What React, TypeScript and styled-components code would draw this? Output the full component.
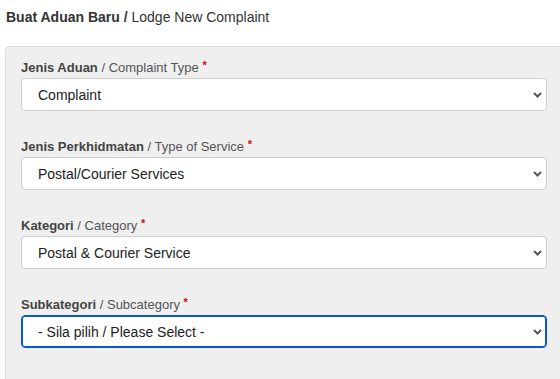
import styled, { createGlobalStyle } from "styled-components";

const GlobalStyle = createGlobalStyle`
  html, body {
    margin: 0;
    padding: 0;
    background: #ffffff;
    overflow: hidden;
    font-family: "Liberation Sans", Arial, Helvetica, sans-serif;
  }
`;

const fields = [
  { id: "jenis", ms: "Jenis Aduan", en: "Complaint Type", value: "Complaint" },
  { id: "perkhidmatan", ms: "Jenis Perkhidmatan", en: "Type of Service", value: "Postal/Courier Services" },
  { id: "kategori", ms: "Kategori", en: "Category", value: "Postal & Courier Service" },
  { id: "subkategori", ms: "Subkategori", en: "Subcategory", value: "- Sila pilih / Please Select -", focused: true },
];

export default function App() {
  return (
    <Page>
      <GlobalStyle />
      <Title>
        <strong>Buat Aduan Baru /</strong> Lodge New Complaint
      </Title>
      <Panel>
        {fields.map((f) => (
          <Field key={f.id}>
            <Label htmlFor={f.id}>
              <strong>{f.ms}</strong> / {f.en} <Required>*</Required>
            </Label>
            <Select id={f.id} $focused={!!f.focused}>
              <span>{f.value}</span>
              <Chevron viewBox="0 0 9 6">
                <path d="M1 1 L4.5 4.5 L8 1" fill="none" stroke="#555" strokeWidth="2" />
              </Chevron>
            </Select>
          </Field>
        ))}
      </Panel>
    </Page>
  );
}

const Page = styled.div`
  padding: 8px 0 0 5px;
  width: 600px;
`;

const Title = styled.h4`
  margin: 0 0 19px 1px;
  font-size: 14px;
  line-height: 19px;
  font-weight: normal;
  color: #333;

  strong {
    font-weight: bold;
  }
`;

const Panel = styled.div`
  background: #efefef;
  border: 1px solid #dcdcdc;
  border-radius: 4px;
  padding: 12px 15px 10px;
  min-height: 400px;
`;

const Field = styled.div`
  display: flex;
  flex-direction: column;
  gap: 1px;
  margin-bottom: 27px;
`;

const Label = styled.label`
  font-size: 13px;
  line-height: 18px;
  color: #555;

  strong {
    color: #444;
  }
`;

const Required = styled.span`
  color: #e00000;
  font-weight: bold;
  font-size: 11px;
  line-height: 0;
  vertical-align: 3px;
`;

const Select = styled.div<{ $focused: boolean }>`
  box-sizing: border-box;
  width: 526px;
  height: 33px;
  display: flex;
  align-items: center;
  justify-content: space-between;
  padding: 0 4px 0 16px;
  background: #fff;
  border-radius: 4px;
  border: 1px solid ${(p) => (p.$focused ? "#0a55d0" : "#cfcfcf")};
  box-shadow: ${(p) => (p.$focused ? "inset 0 0 0 1px #0a55d0" : "none")};
  font-size: 14px;
  color: #222;
`;

const Chevron = styled.svg`
  width: 9px;
  height: 6px;
`;
